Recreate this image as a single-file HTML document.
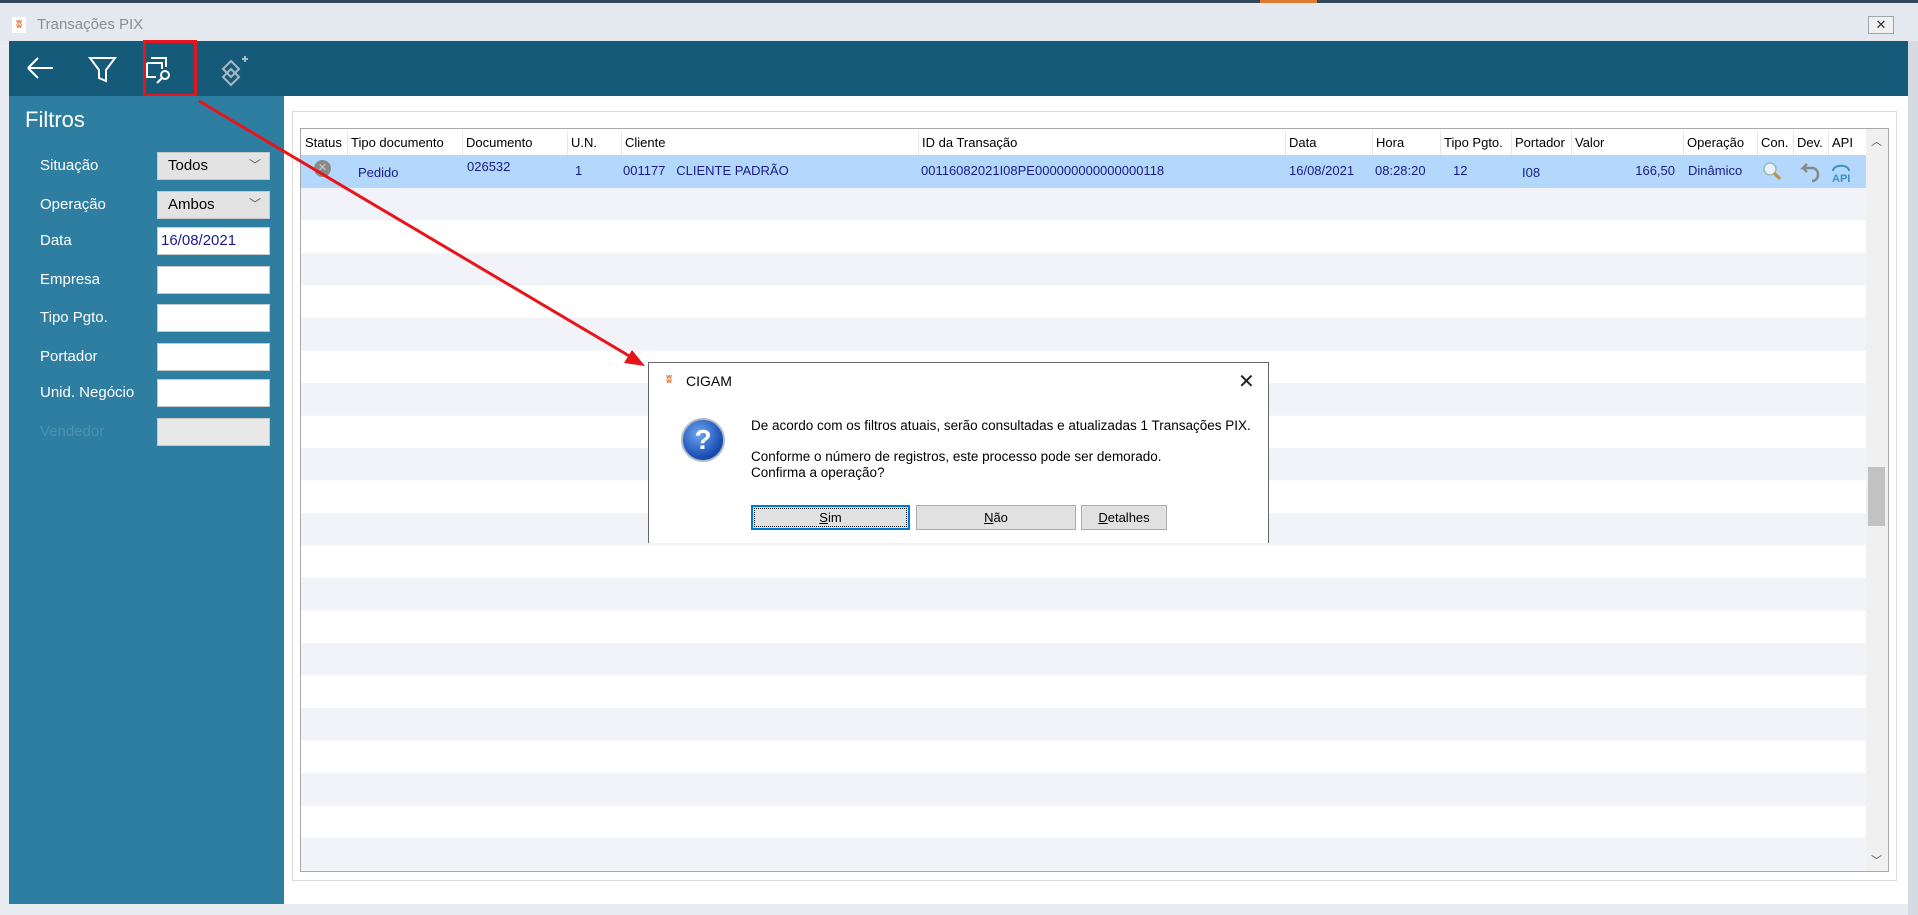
<!DOCTYPE html>
<html><head><meta charset="utf-8"><style>
*{margin:0;padding:0;box-sizing:border-box}
body{width:1918px;height:915px;overflow:hidden;background:#e9edf2;font-family:"Liberation Sans",sans-serif;position:relative}
.a{position:absolute}
.lbl{position:absolute;left:40px;color:#fff;font-size:15px}
.inp{position:absolute;left:157px;width:113px;height:28px;background:#fff;border:1px solid #c8c8c8}
.hd{position:absolute;top:131px;font-size:13px;color:#000;height:24px;line-height:24px;border-left:1px solid #e6e6e6;padding-left:3px}
.c{position:absolute;font-size:13px;color:#1a1a8c;top:163px}
.btn{position:absolute;top:505px;height:25px;background:#e1e1e1;border:1px solid #adadad;font-size:13px;text-align:center;line-height:23px;color:#000}
</style></head><body>
<div class="a" style="left:0;top:0;width:1918px;height:3px;background:#33475a"></div>
<div class="a" style="left:1260px;top:0;width:57px;height:3px;background:#e07a2f"></div>
<div class="a" style="left:0;top:3px;width:1918px;height:38px;background:#e4e9ef"></div>
<div class="a" style="left:12px;top:17px;width:14px;height:16px;background:#fff;color:#e8641e;font-size:11px;font-weight:bold;line-height:16px;text-align:center">ʬ</div>
<div class="a" style="left:37px;top:16px;font-size:15px;color:#8a8f96">Transações PIX</div>
<div class="a" style="left:1868px;top:16px;width:26px;height:18px;border:1px solid #9aa;background:#f0f0f0;font-size:13px;text-align:center;line-height:16px;color:#333">✕</div>
<div class="a" style="left:9px;top:41px;width:1899px;height:55px;background:#155a78"></div>
<svg class="a" style="left:9px;top:41px" width="260" height="55" viewBox="0 0 260 55">
<g stroke="#fff" stroke-width="2" fill="none">
<path d="M19 27H44M19 27L29 17M19 27L29 37"/>
<path d="M81 17H106L97 29V40L90 37V29Z"/>
<path d="M138 22H153V28M138 22V36H147M142 17H157V26"/>
<circle cx="156" cy="34" r="4"/><path d="M153 37L148 42"/>
</g>
<g stroke="#aab8c4" stroke-width="2" fill="none"><path d="M222 20L230 28L222 36L214 28Z M222 28L230 36L222 44L214 36Z M214 28L222 36 M230 28L222 36"/><path d="M233 18H239M236 15V21"/></g>
</svg>
<div class="a" style="left:143px;top:40px;width:54px;height:57px;border:3px solid #e8141c"></div>
<div class="a" style="left:9px;top:96px;width:275px;height:808px;background:#2e7ea2"></div>
<div class="a" style="left:25px;top:107px;color:#fff;font-size:22px">Filtros</div>
<div class="lbl" style="top:157px">Situação</div>
<div class="inp" style="top:152px;background:#e3e3e3;font-size:15px;padding:4px 10px">Todos<span style="position:absolute;right:8px;top:3px;font-size:12px;color:#555">﹀</span></div>
<div class="lbl" style="top:196px">Operação</div>
<div class="inp" style="top:191px;background:#e3e3e3;font-size:15px;padding:4px 10px">Ambos<span style="position:absolute;right:8px;top:3px;font-size:12px;color:#555">﹀</span></div>
<div class="lbl" style="top:232px">Data</div>
<div class="inp" style="top:227px;font-size:15px;color:#1a1a8c;padding:4px 3px">16/08/2021</div>
<div class="lbl" style="top:271px">Empresa</div><div class="inp" style="top:266px"></div>
<div class="lbl" style="top:309px">Tipo Pgto.</div><div class="inp" style="top:304px"></div>
<div class="lbl" style="top:348px">Portador</div><div class="inp" style="top:343px"></div>
<div class="lbl" style="top:384px">Unid. Negócio</div><div class="inp" style="top:379px"></div>
<div class="lbl" style="top:423px;color:#4f90ae">Vendedor</div><div class="inp" style="top:418px;background:#e8e8e8"></div>
<div class="a" style="left:284px;top:96px;width:1624px;height:808px;background:#fff"></div>
<div class="a" style="left:292px;top:111px;width:1605px;height:770px;border:1px solid #dcdcdc"></div>
<div class="a" style="left:300px;top:128px;width:1589px;height:744px;border:1px solid #a8a8a8;background:repeating-linear-gradient(#f2f3f8 0 32.5px,#fff 32.5px 65px);background-position:0 59px"></div>
<div class="a" style="left:301px;top:129px;width:1565px;height:26px;background:#fff"></div>
<div class="a" style="left:301px;top:155px;width:1565px;height:33px;background:#b3d8fb"></div>
<div class="a" style="left:1866px;top:129px;width:22px;height:742px;background:#f0f0f0"></div>
<div class="a" style="left:1868px;top:467px;width:17px;height:59px;background:#c2c2c2"></div>
<div class="a" style="left:1871px;top:133px;font-size:11px;color:#555">︿</div>
<div class="a" style="left:1871px;top:852px;font-size:11px;color:#555">﹀</div>
<div class="hd" style="left:302px;border:0">Status</div>
<div class="hd" style="left:347px">Tipo documento</div>
<div class="hd" style="left:462px">Documento</div>
<div class="hd" style="left:567px">U.N.</div>
<div class="hd" style="left:621px">Cliente</div>
<div class="hd" style="left:918px">ID da Transação</div>
<div class="hd" style="left:1285px">Data</div>
<div class="hd" style="left:1372px">Hora</div>
<div class="hd" style="left:1440px">Tipo Pgto.</div>
<div class="hd" style="left:1511px">Portador</div>
<div class="hd" style="left:1571px">Valor</div>
<div class="hd" style="left:1683px">Operação</div>
<div class="hd" style="left:1757px">Con.</div>
<div class="hd" style="left:1793px">Dev.</div>
<div class="hd" style="left:1828px">API</div>
<div class="a" style="left:314px;top:160px;width:17px;height:17px;border-radius:50%;background:#8a8a8a;color:#ccc;font-size:11px;text-align:center;line-height:17px">✕</div>
<div class="c" style="left:358px;top:165px">Pedido</div>
<div class="c" style="left:467px;top:159px">026532</div>
<div class="c" style="left:575px">1</div>
<div class="c" style="left:623px">001177&nbsp;&nbsp;&nbsp;CLIENTE PADRÃO</div>
<div class="c" style="left:921px">00116082021I08PE000000000000000118</div>
<div class="c" style="left:1289px">16/08/2021</div>
<div class="c" style="left:1375px">08:28:20</div>
<div class="c" style="left:1453px">12</div>
<div class="c" style="left:1522px;top:165px">I08</div>
<div class="c" style="left:1600px;width:75px;text-align:right">166,50</div>
<div class="c" style="left:1688px">Dinâmico</div>
<svg class="a" style="left:1760px;top:159px" width="110" height="26"><circle cx="10" cy="10" r="6" fill="#e8f2fb" stroke="#9bb" stroke-width="1.5"/><path d="M14 14L20 20" stroke="#c98a3a" stroke-width="3"/>
<path d="M52 9H43L47 5M43 9L47 13M52 9C60 9 60 22 52 22" stroke="#888" stroke-width="2.5" fill="none"/>
<path d="M73 12C73 5 89 5 89 12" stroke="#3a8fc8" stroke-width="2" fill="none"/><text x="72" y="23" font-size="11" font-weight="bold" fill="#3a8fc8" font-family="Liberation Sans">API</text></svg>
<svg class="a" style="left:0;top:0" width="1918" height="915"><path d="M199 101L636 360" stroke="#e8141c" stroke-width="3"/><path d="M645 366L624 363L632 350Z" fill="#e8141c"/></svg>
<div class="a" style="left:648px;top:362px;width:621px;height:181px;background:#fff;border:1px solid #666;border-bottom:0"></div>
<div class="a" style="left:662px;top:374px;width:14px;height:16px;background:#fff;color:#e8641e;font-size:11px;font-weight:bold;text-align:center">ʬ</div>
<div class="a" style="left:686px;top:373px;font-size:14px;color:#000">CIGAM</div>
<div class="a" style="left:1238px;top:369px;font-size:20px;color:#222">✕</div>
<div class="a" style="left:681px;top:418px;width:44px;height:44px;border-radius:50%;background:radial-gradient(circle at 40% 35%,#6fa8f0,#1a4fb5 65%,#0d2f7a);border:2px solid #b0b8c8;color:#fff;font-size:28px;font-weight:bold;text-align:center;line-height:40px">?</div>
<div class="a" style="left:751px;top:418px;font-size:13.5px;color:#000">De acordo com os filtros atuais, serão consultadas e atualizadas 1 Transações PIX.</div>
<div class="a" style="left:751px;top:449px;font-size:13.5px;color:#000;line-height:16px">Conforme o número de registros, este processo pode ser demorado.<br>Confirma a operação?</div>
<div class="btn" style="left:751px;width:159px;border:2px solid #0078d7"><span style="outline:1px dotted #000;display:block;margin:2px;line-height:17px"><u>S</u>im</span></div>
<div class="btn" style="left:916px;width:160px"><u>N</u>ão</div>
<div class="btn" style="left:1081px;width:86px"><u>D</u>etalhes</div>
<div class="a" style="left:1908px;top:41px;width:10px;height:874px;background:#d5dbe2"></div>
</body></html>
